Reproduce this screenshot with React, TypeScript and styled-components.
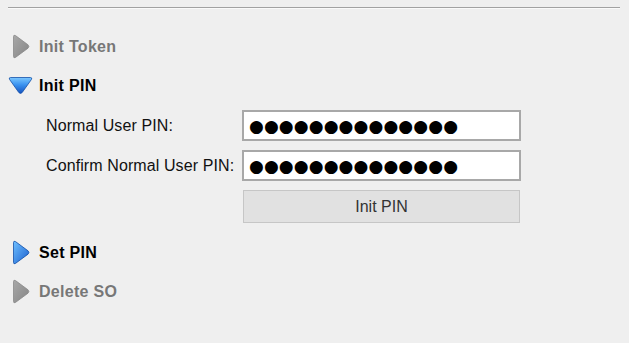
import React from 'react'
import styled, { createGlobalStyle } from 'styled-components'

const GlobalStyle = createGlobalStyle`
  html, body {
    margin: 0;
    padding: 0;
    background: #efefef;
  }
  body {
    font-family: 'Liberation Sans', Arial, sans-serif;
  }
`

const Page = styled.div`
  width: 629px;
  height: 343px;
  padding-top: 7px;
  box-sizing: border-box;
  background: #efefef;
`

const Separator = styled.div`
  margin: 0 9px 0 8px;
  height: 1px;
  background: #a2a2a2;
  border-bottom: 1px solid #fafafa;
`

const Sections = styled.div`
  display: flex;
  flex-direction: column;
  padding-top: 18px;
`

const Header = styled.div<{ $enabled: boolean }>`
  display: flex;
  align-items: center;
  height: 39px;
  padding-left: 8px;
  gap: 6px;
  font-size: 16px;
  font-weight: bold;
  letter-spacing: 0.3px;
  color: ${(p) => (p.$enabled ? '#000' : '#777')};
`

const IconBox = styled.span`
  display: flex;
  align-items: center;
  justify-content: center;
  width: 25px;
  height: 25px;
`

const Form = styled.div`
  display: grid;
  grid-template-columns: 196px 279px;
  grid-auto-rows: 31px;
  row-gap: 9px;
  padding-left: 46px;
  margin-top: 5px;
  margin-bottom: 12px;
`

const Label = styled.label`
  display: flex;
  align-items: center;
  font-size: 16px;
  letter-spacing: 0.1px;
  color: #111;
`

const PinInput = styled.input`
  box-sizing: border-box;
  width: 279px;
  height: 31px;
  margin: 0;
  padding: 0 0 0 5px;
  border: 2px solid #a8a8a8;
  background: #fff;
  outline: none;
  font-family: 'DejaVu Sans', sans-serif;
  font-size: 17px;
  letter-spacing: 0.1px;
  color: #000;
`

const Button = styled.button`
  grid-column: 2;
  box-sizing: border-box;
  width: 277px;
  height: 33px;
  margin-left: 1px;
  border: 1px solid #c6c6c6;
  background: #e1e1e1;
  font-family: 'Liberation Sans', Arial, sans-serif;
  font-size: 16px;
  color: #333;
`

const RightArrow = ({ active }: { active: boolean }) => {
  const id = active ? 'rBlue' : 'rGray'
  return (
    <svg width="18" height="25" viewBox="0 0 18 25">
      <defs>
        <linearGradient id={id} x1="0" y1="0" x2="1" y2="1">
          <stop offset="0" stopColor={active ? '#6fc0ff' : '#a8a8a8'} />
          <stop offset="1" stopColor={active ? '#1a5fcf' : '#858585'} />
        </linearGradient>
      </defs>
      <path
        d="M1.5 2.5 Q1.5 0.5 3.5 1.6 L16 10.8 Q17.8 12.5 16 14.2 L3.5 23.4 Q1.5 24.5 1.5 22.5 Z"
        fill={`url(#${id})`}
        stroke={active ? '#1450a8' : '#8a8a8a'}
        strokeWidth="0.8"
      />
    </svg>
  )
}

const DownArrow = () => (
  <svg width="26" height="19" viewBox="0 0 25 18">
    <defs>
      <linearGradient id="dBlue" x1="0" y1="0" x2="0" y2="1">
        <stop offset="0" stopColor="#7cc8ff" />
        <stop offset="0.45" stopColor="#3b93f0" />
        <stop offset="1" stopColor="#1452c0" />
      </linearGradient>
    </defs>
    <path
      d="M2.5 1 H22.5 Q24.5 1 23.4 3 L14.2 16 Q12.5 17.8 10.8 16 L1.6 3 Q0.5 1 2.5 1 Z"
      fill="url(#dBlue)"
      stroke="#1450a8"
      strokeWidth="0.8"
    />
  </svg>
)

const dots = '●'.repeat(14)

const App: React.FC = () => (
  <>
    <GlobalStyle />
    <Page>
      <Separator />
      <Sections>
        <Header $enabled={false}>
          <IconBox>
            <RightArrow active={false} />
          </IconBox>
          Init Token
        </Header>
        <Header $enabled>
          <IconBox>
            <DownArrow />
          </IconBox>
          Init PIN
        </Header>
        <Form>
          <Label>Normal User PIN:</Label>
          <PinInput readOnly value={dots} />
          <Label>Confirm Normal User PIN:</Label>
          <PinInput readOnly value={dots} />
          <Button>Init PIN</Button>
        </Form>
        <Header $enabled>
          <IconBox>
            <RightArrow active />
          </IconBox>
          Set PIN
        </Header>
        <Header $enabled={false}>
          <IconBox>
            <RightArrow active={false} />
          </IconBox>
          Delete SO
        </Header>
      </Sections>
    </Page>
  </>
)

export default App
